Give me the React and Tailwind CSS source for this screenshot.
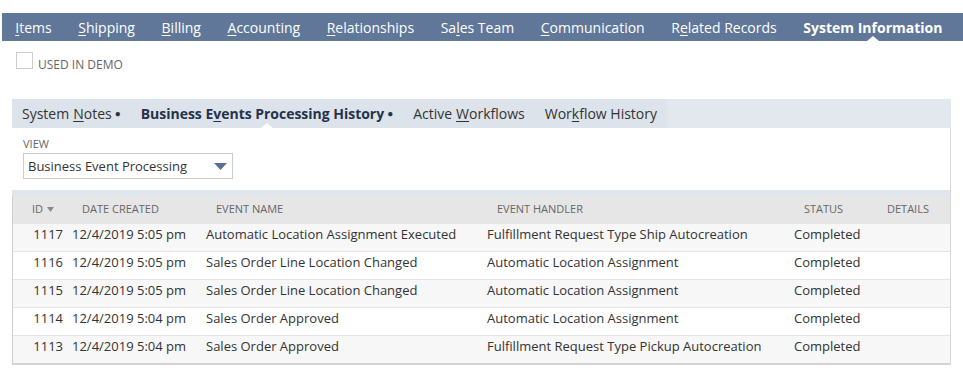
import React from 'react';

const topTabs = [
    { pre: '', u: 'I', post: 'tems' },
    { pre: '', u: 'S', post: 'hipping' },
    { pre: '', u: 'B', post: 'illing' },
    { pre: '', u: 'A', post: 'ccounting' },
    { pre: '', u: 'R', post: 'elationships' },
    { pre: 'Sa', u: 'l', post: 'es Team' },
    { pre: '', u: 'C', post: 'ommunication' },
    { pre: 'R', u: 'e', post: 'lated Records' },
];

const rows = [
    ['1117', '12/4/2019 5:05 pm', 'Automatic Location Assignment Executed', 'Fulfillment Request Type Ship Autocreation', 'Completed'],
    ['1116', '12/4/2019 5:05 pm', 'Sales Order Line Location Changed', 'Automatic Location Assignment', 'Completed'],
    ['1115', '12/4/2019 5:05 pm', 'Sales Order Line Location Changed', 'Automatic Location Assignment', 'Completed'],
    ['1114', '12/4/2019 5:04 pm', 'Sales Order Approved', 'Automatic Location Assignment', 'Completed'],
    ['1113', '12/4/2019 5:04 pm', 'Sales Order Approved', 'Fulfillment Request Type Pickup Autocreation', 'Completed'],
];

const cols = 'grid grid-cols-[54px_134px_281px_307px_93px_1fr]';

// small white notch under the selected tab
const Notch = () => (
    <span className="absolute bottom-0 left-1/2 -translate-x-1/2 w-0 h-0 border-l-[6px] border-r-[6px] border-b-[5px] border-l-transparent border-r-transparent border-b-white" />
);

export default function App() {
    return (
        <div className="w-[963px] h-[373px] bg-white overflow-hidden font-['Open_Sans',sans-serif] pt-[13px]">
            {/* main tabs */}
            <div className="ml-[2px] h-[28px] bg-[#607799] flex items-center text-[14px] text-white whitespace-nowrap">
                {topTabs.map((t, i) => (
                    <div key={i} className="flex-none px-[13.3px] h-full flex items-center">
                        {t.pre}<span className="underline underline-offset-2">{t.u}</span>{t.post}
                    </div>
                ))}
                <div className="relative flex-none px-[13.3px] h-full flex items-center font-bold">
                    System Information
                    <Notch />
                </div>
            </div>

            {/* checkbox */}
            <div className="flex items-center mt-[11px] ml-[16px] h-[17px]">
                <span className="w-[17px] h-[17px] border border-[#cccccc] bg-white" />
                <span className="ml-[5px] mt-[9px] text-[12px] text-[#666666] uppercase leading-none">Used in Demo</span>
            </div>

            {/* sub tabs panel */}
            <div className="mt-[30px] ml-[12px] mr-[12px]">
                <div className="h-[29px] bg-[#e3e8ef] flex text-[14px] text-[#333333] whitespace-nowrap">
                    <div className="bg-[#dde3ea] flex h-full">
                        <div className="px-[10px] flex items-center">
                            System <span className="underline underline-offset-2 ml-[4px]">N</span>otes<span className="ml-[3px] text-[10px]">&#9679;</span>
                        </div>
                        <div className="relative px-[10px] flex items-center font-bold text-[#24324a] tracking-[-0.02px]">
                            Business E<span className="underline underline-offset-2">v</span>ents Processing History<span className="ml-[3px] text-[10px] font-normal">&#9679;</span>
                            <Notch />
                        </div>
                        <div className="px-[10px] flex items-center">
                            Active <span className="underline underline-offset-2 ml-[4px]">W</span>orkflows
                        </div>
                        <div className="px-[10px] flex items-center">
                            Wor<span className="underline underline-offset-2">k</span>flow History
                        </div>
                    </div>
                </div>

                <div className="border-r border-[#d6d6d6]">
                    {/* view select */}
                    <div className="h-[62px] pl-[11px] pt-[9px] bg-white">
                        <div className="text-[11px] text-[#666666] uppercase leading-[14px]">View</div>
                        <div className="mt-[2px] w-[210px] h-[26px] border border-[#cccccc] flex items-center justify-between pl-[4px] pr-[5px] text-[13px] text-[#333333]">
                            <span className="pt-[1px]">Business Event Processing</span>
                            <svg width="13" height="7" viewBox="0 0 13 7">
                                <path d="M0 0 H13 L6.5 7 Z" fill="#5a6f91" />
                            </svg>
                        </div>
                    </div>
                    <div className="h-[6px] bg-[#e1e6ed]" />

                    {/* table */}
                    <div className="border-l border-[#cfcfcf] border-b-2 border-b-[#d4d4d4]">
                        <div className={`${cols} h-[27px] bg-[#e6e6e6] text-[11px] text-[#666666] uppercase items-center`}>
                            <div className="pl-[19px] flex items-center">
                                ID
                                <svg className="ml-[4px]" width="7" height="5" viewBox="0 0 7 5">
                                    <path d="M0 0 H7 L3.5 5 Z" fill="#8a8a8a" />
                                </svg>
                            </div>
                            <div className="pl-[15px]">Date Created</div>
                            <div className="pl-[15px]">Event Name</div>
                            <div className="pl-[15px]">Event Handler</div>
                            <div className="pl-[15px]">Status</div>
                            <div className="pl-[5px]">Details</div>
                        </div>
                        {rows.map((r, i) => (
                            <div
                                key={r[0]}
                                className={`${cols} h-[28px] items-center pb-[6px] text-[13px] text-[#333333] border-t border-[#e4e4e4] ${i % 2 === 0 ? 'bg-[#f7f7f7]' : 'bg-white'}`}
                            >
                                <div className="text-right pr-[4px]">{r[0]}</div>
                                <div className="pl-[5px]">{r[1]}</div>
                                <div className="pl-[5px]">{r[2]}</div>
                                <div className="pl-[5px]">{r[3]}</div>
                                <div className="pl-[5px]">{r[4]}</div>
                                <div />
                            </div>
                        ))}
                    </div>
                </div>
            </div>
        </div>
    );
}
